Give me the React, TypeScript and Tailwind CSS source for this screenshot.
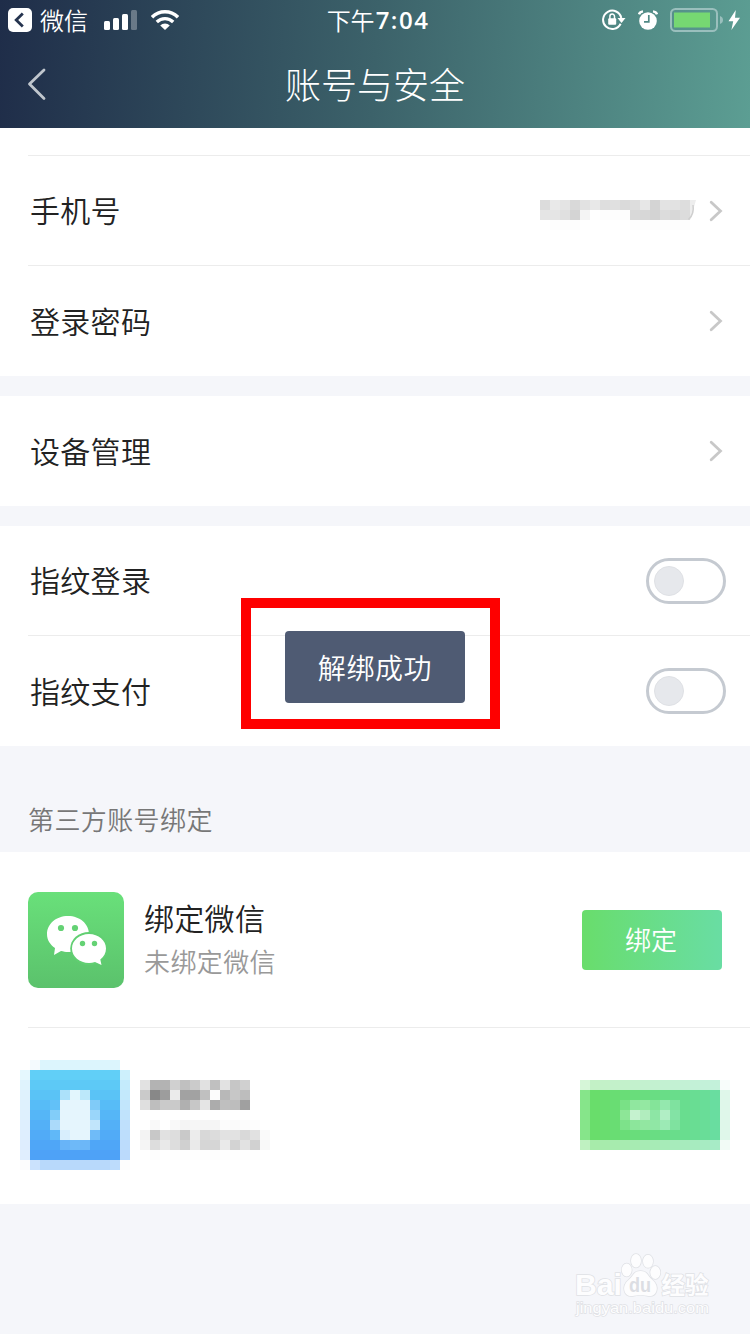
import type { ReactNode } from 'react';

const CELL = 10;

const phoneCells = [
  '#dcdcdc #e9e9e9 #e4e4e4 #d9d9d9 #e2e2e2 #e8e8e8 #dedede #e0e0e0 #dadada #dddddd #e7e7e7 #d4d4d4 #e3e3e3 #e2e2e2 #dddddd',
  '#e5e5e5 #e5e5e5 #e0e0e0 #d4d4d4 #f4f4f4 #ffffff #fdfdfd #fdfdfd #fdfdfd #d9d9d9 #d7d7d7 #d3d3d3 #dcdcdc #d8d8d8 #dcdcdc',
  '- #fdfdfd #fdfdfd #fdfdfd - - - - - #fdfdfd #fdfdfd #fdfdfd #fdfdfd #fdfdfd #fdfdfd',
];

const avatarCells = [
  '- #f4fafe #dcf5fd #dcf5fd #dcf5fd #dcf5fd #dcf5fd #dcf5fd #dcf5fd #dcf5fd -',
  '#e5f8fe #61cff7 #61cff7 #61cff7 #61cff7 #61cff7 #61cff7 #61cff7 #61cff7 #61cff7 #cdf0fc',
  '#dff3fd #5dc9f6 #5dc9f6 #5dc9f6 #5dc9f6 #5dc9f6 #5dc9f6 #5dc9f6 #5dc9f6 #5dc9f6 #c4ebfc',
  '#dff2fd #5ac3f6 #5ac3f6 #5ac3f6 #ace1fa #e2f6fd #bce8fa #5ac3f6 #5ac3f6 #5ac3f6 #c3e9fc',
  '#def1fd #57bcf7 #57bcf7 #62c1f8 #e5f5fd #e5f5fd #e5f5fd #80cbf8 #57bcf7 #57bcf7 #c2e6fc',
  '#def0fd #55b6f7 #55b6f7 #82cdf9 #e5f5fd #e5f5fd #e5f5fd #9ad6fa #55b6f7 #55b6f7 #c0e3fc',
  '#deeffe #53b0f7 #53b0f7 #abdafa #e5f5fd #e5f5fd #e5f5fd #c1e5fb #53b0f7 #53b0f7 #bfe0fc',
  '#deeefe #51abf7 #51abf7 #60b8f8 #d8eefd #e5f5fd #e5f5fd #6fbbf8 #51abf7 #51abf7 #bddefc',
  '#deedfe #4fa6f7 #4fa6f7 #4fa6f7 #68b4f8 #6eb9f8 #6cb7f8 #4fa6f7 #4fa6f7 #4fa6f7 #bcdcfc',
  '#e0eefe #4ea2f7 #4ea2f7 #4ea2f7 #4ea2f7 #4ea2f7 #4ea2f7 #4ea2f7 #4ea2f7 #4ea2f7 #bbdafc',
  '#fcfcfd #cbe2fd #b8d9fb #b8d9fb #b8d9fb #b8d9fb #b8d9fb #b8d9fb #b8d9fb #bddcfc #fdfdfd',
];

const nameCells = [
  '#e2e2e2 #b3b3b3 #b3b3b3 #d0d0d0 #c0c0c0 #cbcbcb #e1e1e1 #c0c0c0 #e2e2e2 #c6c6c6 #d0d0d0',
  '#cacaca #888888 #9d9d9d #ebebeb #a2a2a2 #a2a2a2 #c0c0c0 #fcfcfc #b8b8b8 #c7c7c7 #bdbdbd',
  '#dfdfdf #bebebe #cacaca #cacaca #b0b0b0 #c7c7c7 #e5e5e5 #acacac #bfbfbf #bdbdbd #a0a0a0',
];

const statusCells = [
  '- #f9f9f9 #ffffff #f9f9f9 #f4f4f4 #f6f6f6 #f5f5f5 #f5f5f5 #fcfcfc #fafafa #fcfcfc #fdfdfd -',
  '#f3f3f3 #c8c8c8 #e1e1e1 #dddddd #c9c9c9 #ececec #d8d8d8 #dcdcdc #e2e2e2 #e2e2e2 #d9d9d9 #e1e1e1 #fafafa',
  '#f5f5f5 #dddddd #e9e9e9 #dddddd #d0d0d0 #eaeaea #d6d6d6 #d6d6d6 #eaeaea #d3d3d3 #e2e2e2 #d1d1d1 #f9f9f9',
  '- #fdfdfd - #fefefe #fefefe #fefefe #fefefe #fdfdfd #fefefe #fefefe #fefefe #fefefe -',
];

const buttonCells = [
  '#d6f6d8 #c3f1c6 #c3f1c8 #c3f1ca #c3f1cb #c3f1cd #c3f1cf #c3f1d0 #c3f1d2 #c3f1d3 #c3f1d5 #c3f1d7 #c3f1d9 #c3f1da #f8fdfb',
  '#86e58a #69dd6b #69dd6f #69dd73 #69dd77 #69dd7b #69dd7f #69dd83 #69dd87 #69dd8b #69dd8f #69dd93 #69dd98 #69dda0 #dff7ea',
  '#86e58a #69dd6b #69dd6f #69dd73 #79e186 #90e79f #94e8a2 #84e499 #94e8ae #7fe29f #69dd8f #69dd93 #69dd98 #69dda0 #dff7ea',
  '#86e58a #69dd6b #69dd6f #69dd73 #8de697 #c5f2cf #b1edbe #8de6a5 #b1eec5 #83e3a5 #69dd8f #69dd93 #69dd98 #69dda0 #dff7ea',
  '#86e58a #69dd6b #69dd6f #69dd73 #7de28a #8ce69b #92e7a1 #90e7a5 #9ceab5 #7fe29f #69dd8f #69dd93 #69dd98 #69dda0 #dff7ea',
  '#86e58a #69dd6b #69dd6f #69dd73 #69dd77 #69dd7b #69dd7f #69dd83 #69dd87 #69dd8b #69dd8f #69dd93 #69dd98 #69dda0 #dff7ea',
  '#bff1c1 #a7ebaa #a7ebac #a7ebae #a7ebb0 #a7ebb2 #a7ebb4 #a7ebb6 #a7ebb8 #a7ebbb #a7ebbd #a7ebbf #a7ebc2 #a7ebc6 #f2fbf6',
];

function Mosaic({ rows, className }: { rows: string[]; className?: string }) {
  const cells = rows.map((row) => row.split(' '));
  const width = cells[0].length * CELL;
  const height = cells.length * CELL;

  return (
    <svg width={width} height={height} shapeRendering="crispEdges" className={className}>
      {cells.map((row, y) =>
        row.map((color, x) =>
          color === '-' ? null : (
            <rect key={`${x}-${y}`} x={x * CELL} y={y * CELL} width={CELL} height={CELL} fill={color} />
          ),
        ),
      )}
    </svg>
  );
}

function Chevron() {
  return (
    <svg width="14" height="22" viewBox="0 0 14 22" fill="none" className="shrink-0">
      <path d="M2.2 2.2 11.5 11 2.2 19.8" stroke="#c8c8c8" strokeWidth="2.8" strokeLinecap="round" />
    </svg>
  );
}

function Toggle() {
  return (
    <div className="flex h-[46px] w-20 items-center rounded-full border-3 border-[#c5cad1] pl-[5px]">
      <div className="size-[30px] rounded-full border border-[#dfe1e5] bg-[#e6e8ec]" />
    </div>
  );
}

function Row({ label, line, children }: { label: string; line?: boolean; children: ReactNode }) {
  return (
    <div className={`ml-7 flex h-[110px] items-center justify-between pl-0.5 ${line ? 'border-b border-[#ececec]' : ''}`}>
      <span className="pb-[3px] text-[30px] leading-none tracking-[0.3px]">{label}</span>
      {children}
    </div>
  );
}

function StatusBar() {
  return (
    <div className="grid h-10 grid-cols-3 items-center">
      <div className="flex items-center pl-2">
        <svg width="24" height="24" viewBox="0 0 24 24" fill="none">
          <rect width="24" height="24" rx="5" fill="#fff" />
          <path d="M14.8 5.5 8.2 12l6.6 6.5" stroke="#25344f" strokeWidth="2.8" />
        </svg>
        <span className="ml-2 text-2xl leading-none">微信</span>
        <svg width="33" height="20" viewBox="0 0 33 20" fill="#fff" className="ml-4">
          <rect y="11" width="6" height="9" rx="1.5" />
          <rect x="9" y="8" width="6" height="12" rx="1.5" />
          <rect x="18" y="4" width="6" height="16" rx="1.5" />
          <rect x="27" width="6" height="20" rx="1.5" opacity="0.3" />
        </svg>
        <svg width="28" height="20" viewBox="0 0 28 20" fill="none" stroke="#fff" className="ml-3.5">
          <path d="M1 7.2a18.5 18.5 0 0 1 26 0" strokeWidth="3.5" />
          <path d="M5.8 12a11.7 11.7 0 0 1 16.4 0" strokeWidth="3.3" />
          <path d="M14 20 9.2 15.4a6.8 6.8 0 0 1 9.6 0Z" fill="#fff" stroke="none" />
        </svg>
      </div>
      <div className="flex items-center justify-center pl-1.5 text-2xl leading-none">
        下午
        <span className="ml-px font-['Open_Sans'] font-semibold tracking-[1.5px]">7:04</span>
      </div>
      <div className="flex items-center justify-end pr-2.5">
        <svg width="24" height="22" viewBox="0 0 24 22" fill="none" stroke="#fff">
          <path d="M18.6 14.8A9.2 9.2 0 1 1 19.300 9" strokeWidth="2" />
          <path d="M15.500 9h8l-4 5z" fill="#fff" stroke="none" />
          <rect x="6.200" y="9.300" width="8" height="6.500" rx="1" fill="#fff" stroke="none" />
          <path d="M7.900 10V7.400a2.300 2.300 0 0 1 4.600 0V10" strokeWidth="1.500" />
        </svg>
        <svg width="20" height="20" viewBox="0 0 20 20" fill="none" className="ml-3">
          <circle cx="10" cy="11" r="8.800" fill="#fff" />
          <path d="M1 4.400Q1.800 1.800 5 1.400M19 4.400Q18.200 1.800 15 1.400" stroke="#fff" strokeWidth="2.400" />
          <path d="M10.800 5v6.800H6" stroke="#508985" strokeWidth="1.700" />
        </svg>
        <svg width="54" height="24" viewBox="0 0 54 24" fill="none" className="ml-3">
          <rect x="1" y="1" width="46" height="22" rx="4.500" stroke="#9abfbd" strokeWidth="2" />
          <rect x="4" y="4.500" width="36" height="15" fill="#76d872" />
          <path d="M50 8q3 1.200 3 4t-3 4z" fill="#9abfbd" />
        </svg>
        <svg width="12" height="20" viewBox="0 0 12 20" fill="#fff" className="ml-1">
          <path d="M7.800 0 .5 11.200h4.700L3.400 20 12 7.800H7z" />
        </svg>
      </div>
    </div>
  );
}

function WechatIcon() {
  return (
    <div className="size-24 rounded-[10px] bg-linear-to-b from-[#69e07a] to-[#5bc26c]">
      <svg width="96" height="96" viewBox="0 0 96 96">
        <path d="M40 24c-12 0-21 8-21 18 0 6 3 10.500 8 14l-1 7 7-4c2.200.5 4.700 1 7 1 12 0 21-8 21-18s-9-18-21-18Z" fill="#fff" />
        <ellipse cx="61" cy="56.500" rx="18.800" ry="16.500" fill="#61cf72" />
        <path d="M61 42c-9.500 0-17 6.500-17 14.500S51.500 71 61 71c2 0 4-.3 6-.9l6.500 3-1.200-5.600c3.500-2.500 5.700-6.500 5.700-11C78 48.500 70.500 42 61 42Z" fill="#fff" />
        <g fill="#64d274">
          <circle cx="33" cy="36" r="3.100" />
          <circle cx="47" cy="36" r="3.100" />
          <circle cx="54.500" cy="51.500" r="2.700" />
          <circle cx="66.500" cy="51.500" r="2.700" />
        </g>
      </svg>
    </div>
  );
}

function Watermark() {
  return (
    <svg
      width="144"
      height="70"
      viewBox="0 0 144 70"
      fill="#fdfdfe"
      stroke="#dfe1e5"
      strokeWidth="1.500"
      paintOrder="stroke"
      className="font-['Liberation_Sans','Noto_Sans_CJK_SC',sans-serif]"
    >
      <text x="1" y="44.500" fontSize="30" fontWeight="700" textLength="47" lengthAdjust="spacingAndGlyphs">Bai</text>
      <ellipse cx="52.700" cy="20" rx="5" ry="6.500" />
      <ellipse cx="62" cy="10.700" rx="5" ry="6.800" />
      <ellipse cx="74" cy="11.300" rx="5" ry="6.500" />
      <ellipse cx="81.300" cy="22.500" rx="5" ry="6.500" />
      <path d="M66.500 21c-7 0-7 5-12 9-8 7-4 17 4 16 4-1 12-1 16 0 8 1 12-9 4-16-5-4-5-9-12-9Z" />
      <text x="55" y="42" fontSize="20" fontWeight="700" fill="#dcdee3" stroke="none" textLength="22" lengthAdjust="spacingAndGlyphs">du</text>
      <text x="87.500" y="44" fontSize="23.500" fontWeight="700">经验</text>
      <text x="2" y="63" fontSize="15" strokeWidth="1.300" textLength="133" lengthAdjust="spacingAndGlyphs">jingyan.baidu.com</text>
    </svg>
  );
}

export default function App() {
  return (
    <div className="relative flex h-[1334px] w-[750px] flex-col overflow-hidden bg-[#f5f6fa] font-['Noto_Sans_CJK_SC',sans-serif] font-[350] text-[#222]">
      <header className="h-32 shrink-0 bg-linear-[94deg] from-[#1f2d49] via-[#3c626a] to-[#5c9e93] text-white">
        <StatusBar />
        <div className="grid h-[88px] grid-cols-[1fr_auto_1fr] items-center">
          <svg width="20" height="34" viewBox="0 0 20 34" fill="none" className="ml-[27px]">
            <path d="M17 3 2.500 17 17 31.500" stroke="#c0c6cd" strokeWidth="2.800" strokeLinecap="round" strokeLinejoin="round" />
          </svg>
          <h1 className="pb-[3px] text-4xl leading-none font-light">账号与安全</h1>
        </div>
      </header>

      <section className="bg-white">
        <div className="ml-7 h-7 border-b border-[#ececec]" />
        <Row label="手机号" line>
          <div className="flex items-center pr-[27px]">
            <div className="relative mr-[15px] h-[22px] w-[154px] overflow-visible">
              <Mosaic rows={phoneCells} />
              <svg width="12" height="22" viewBox="0 0 12 22" fill="none" className="absolute top-0 left-[146px]">
                <path d="M4 0h6l-2 7q-1 8-4 13z" fill="#ededed" />
                <path d="M7 5q1.500 9-4.500 14.500" stroke="#cfcfcf" strokeWidth="1.500" />
              </svg>
            </div>
            <Chevron />
          </div>
        </Row>
        <Row label="登录密码">
          <div className="pr-[27px]">
            <Chevron />
          </div>
        </Row>
      </section>

      <section className="mt-5 bg-white">
        <Row label="设备管理">
          <div className="pr-[27px]">
            <Chevron />
          </div>
        </Row>
      </section>

      <section className="mt-5 bg-white">
        <Row label="指纹登录" line>
          <div className="pr-6">
            <Toggle />
          </div>
        </Row>
        <Row label="指纹支付">
          <div className="pr-6">
            <Toggle />
          </div>
        </Row>
      </section>

      <h2 className="flex h-[106px] items-end pb-5 pl-7 text-[26px] leading-none tracking-[0.4px] text-[#777]">
        第三方账号绑定
      </h2>

      <section className="bg-white">
        <div className="ml-7 flex h-44 items-center border-b border-[#ececec] pr-7">
          <WechatIcon />
          <div className="ml-5 flex flex-col gap-4 pb-[3px]">
            <span className="text-[30px] leading-none tracking-[0.3px]">绑定微信</span>
            <span className="text-[26px] leading-none tracking-[0.4px] text-[#999]">未绑定微信</span>
          </div>
          <button className="ml-auto h-[60px] w-[140px] rounded bg-linear-to-r from-[#69dd6b] to-[#69dda3] pr-0.5 pb-0.5 text-[26px] leading-none text-white">
            绑定
          </button>
        </div>
        <div className="flex h-44 items-start px-5 pt-8">
          <Mosaic rows={avatarCells} />
          <div className="mt-5 ml-2.5 flex flex-col gap-2.5">
            <Mosaic rows={nameCells} />
            <Mosaic rows={statusCells} />
          </div>
          <Mosaic rows={buttonCells} className="mt-5 ml-auto" />
        </div>
      </section>

      <div className="mt-auto flex justify-end pr-8 pb-3.5">
        <Watermark />
      </div>

      {/* toast with its highlight frame */}
      <div className="absolute top-[598px] left-[241px] h-[131px] w-[259px] border-10 border-[#fe0000] pt-[23px] pl-[34px]">
        <div className="flex h-[72px] w-[180px] items-center justify-center rounded bg-[#4f5b73] pb-px text-[28px] leading-none tracking-[0.6px] text-white">
          解绑成功
        </div>
      </div>
    </div>
  );
}
